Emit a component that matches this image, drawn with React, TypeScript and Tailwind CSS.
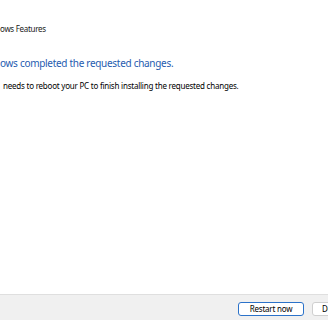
export default function App() {
  return (
    <div className="w-[328px] h-[320px] bg-white flex flex-col overflow-hidden font-['Noto_Sans',sans-serif] text-black">
      <div className="flex-1 flex flex-col">
        <div className="pt-[24px] text-[8px] leading-[10px] tracking-[-0.3px] text-[#1a1a1a] whitespace-nowrap">
          ows Features
        </div>
        <div className="mt-[23px] text-[10px] leading-[12px] tracking-[-0.3px] text-[#1f5cb0] whitespace-nowrap">
          ows completed the requested changes.
        </div>
        <div className="mt-[12px] pl-[3px] text-[8px] leading-[10px] tracking-[-0.22px] whitespace-nowrap">
          needs to reboot your PC to finish installing the requested changes.
        </div>
      </div>
      <div className="h-[26px] bg-[#f0f0f0] border-t border-[#dfdfdf] flex items-start pt-[7px] pl-[238px] gap-[8px] whitespace-nowrap">
        <button className="shrink-0 w-[66px] h-[14px] bg-white border border-[#2b72c9] rounded-[3px] text-[8px] leading-[12px] tracking-[-0.2px] text-black">
          Restart now
        </button>
        <button className="shrink-0 w-[66px] h-[14px] bg-white border border-[#cfcfcf] rounded-[3px] text-[8px] leading-[12px] tracking-[-0.2px] text-black text-left pl-[9px]">
          Don't restart
        </button>
      </div>
    </div>
  );
}
